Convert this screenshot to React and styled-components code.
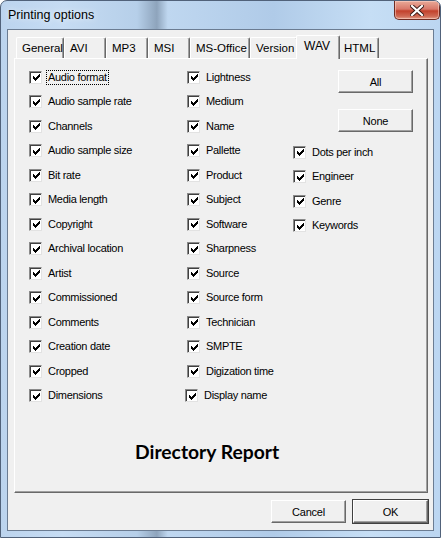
import React from "react";
import styled, { createGlobalStyle } from "styled-components";

const GlobalStyle = createGlobalStyle`
  html, body { margin: 0; padding: 0; background: #fff; }
  body { font-family: "Liberation Sans", Arial, sans-serif; }
`;

const Window = styled.div`
  width: 441px;
  height: 538px;
  box-sizing: border-box;
  border: 1px solid #51627a;
  border-radius: 7px 7px 0 0;
  background: linear-gradient(90deg, #bcd4ee 0%, #c6dcf3 14%, #b6cfe9 31%, #8ea4bc 35.5%, #bfd7f0 38%, #b0cbe8 62%, #c6def5 84%, #bcd6f1 100%);
  display: flex;
  flex-direction: column;
  overflow: hidden;
`;

const TitleBar = styled.div`
  height: 28px;
  display: flex;
  align-items: flex-start;
  padding-left: 7px;
`;

const Title = styled.div`
  font-size: 12.5px;
  color: #000;
  margin-top: 7px;
  text-shadow: 0 0 6px rgba(255, 255, 255, 0.9);
`;

const CloseButton = styled.div`
  margin-left: auto;
  width: 46px;
  height: 19px;
  box-sizing: border-box;
  border: 1px solid #6e2b22;
  border-top: none;
  border-radius: 0 0 5px 5px;
  background: linear-gradient(#e9aa98 0%, #d8786a 45%, #c2412c 55%, #cf6a55 85%, #e3a08c 100%);
  box-shadow: inset 0 0 0 1px rgba(255, 220, 210, 0.5);
  display: flex;
  align-items: center;
  justify-content: center;
`;

const Client = styled.div`
  flex: 1;
  margin: 0 6px 6px;
  border: 1px solid #6b7c92;
  background: #f0f0f0;
  display: flex;
  flex-direction: column;
  padding: 5px 5px 7px 6px;
  font-size: 11px;
  color: #000;
`;

const TabStrip = styled.div`
  display: flex;
  height: 23px;
  padding-left: 2px;
  position: relative;
  z-index: 1;
`;

const Tab = styled.div`
  box-sizing: border-box;
  width: ${(p) => p.w}px;
  height: ${(p) => (p.active ? 24 : 21)}px;
  margin-top: ${(p) => (p.active ? 0 : 2)}px;
  margin-left: ${(p) => (p.active ? -2 : 0)}px;
  margin-right: ${(p) => (p.active ? -2 : 0)}px;
  padding: ${(p) => (p.active ? "3px 0 0 7px" : "4px 0 0 5px")};
  background: #f0f0f0;
  border-top: 1px solid #fff;
  border-left: 1px solid #fff;
  border-right: 1px solid #696969;
  border-radius: 2px 2px 0 0;
  box-shadow: inset -1px 0 #a0a0a0;
  font-size: ${(p) => (p.active ? 12 : 11.5)}px;
  white-space: nowrap;
  position: relative;
  z-index: ${(p) => (p.active ? 2 : 1)};
`;

const Panel = styled.div`
  flex: 1;
  display: flex;
  flex-direction: column;
  border-top: 1px solid #fff;
  border-left: 1px solid #fff;
  border-right: 1px solid #696969;
  border-bottom: 1px solid #696969;
  box-shadow: inset -1px -1px #a0a0a0;
  padding: 6px 0 0 14px;
`;

const Columns = styled.div`
  display: flex;
`;

const Column = styled.div`
  width: ${(p) => p.w}px;
  display: flex;
  flex-direction: column;
`;

const Row = styled.div`
  height: 24.5px;
  display: flex;
  align-items: center;
  margin-left: ${(p) => p.shift || 0}px;
`;

const Box = styled.span`
  width: 13px;
  height: 13px;
  box-sizing: border-box;
  flex: none;
  background: #fff;
  border: 1px solid;
  border-color: #8a8a8a #e2e2e2 #e2e2e2 #8a8a8a;
  box-shadow: inset 1px 1px #404040;
  display: flex;
  align-items: center;
  justify-content: center;
  padding: 1px 0 0 1px;
`;

const Label = styled.span`
  margin-left: 4px;
  padding: 0 1px;
  line-height: 13px;
  border: 1px dotted ${(p) => (p.focused ? "#000" : "transparent")};
  white-space: nowrap;
  letter-spacing: -0.3px;
`;

const ButtonStack = styled.div`
  display: flex;
  flex-direction: column;
  gap: 16px;
  padding-left: 45px;
  margin-top: 5px;
  margin-bottom: 8px;
`;

const Button = styled.div`
  width: 75px;
  height: 23px;
  box-sizing: border-box;
  background: #f0f0f0;
  border: 1px solid;
  border-color: #fff #696969 #696969 #fff;
  box-shadow: inset -1px -1px #a0a0a0, ${(p) => (p.isDefault ? "0 0 0 1px #404040" : "0 0 0 0 transparent")};
  display: flex;
  align-items: center;
  justify-content: center;
  font-size: 11px;
  letter-spacing: -0.2px;
`;

const ReportArea = styled.div`
  flex: 1;
  display: flex;
  align-items: center;
  padding-left: 106px;
  padding-top: 2px;
`;

const ReportTitle = styled.div`
  font-family: Lato, "Open Sans", sans-serif;
  font-weight: 700;
  font-size: 19.3px;
  color: #000;
`;

const Footer = styled.div`
  display: flex;
  justify-content: flex-end;
  gap: 7px;
  margin-top: 7px;
`;

// classic 7x7 pixel check mark
const checkPixels = [
  [6, 0],
  [5, 1], [6, 1],
  [0, 2], [4, 2], [5, 2], [6, 2],
  [0, 3], [1, 3], [3, 3], [4, 3], [5, 3],
  [0, 4], [1, 4], [2, 4], [3, 4], [4, 4],
  [1, 5], [2, 5], [3, 5],
  [2, 6],
];

function Check() {
  return (
    <svg width="7" height="7" viewBox="0 0 7 7" shapeRendering="crispEdges">
      {checkPixels.map(([x, y]) => (
        <rect key={`${x}-${y}`} x={x} y={y} width="1" height="1" fill="#000" />
      ))}
    </svg>
  );
}

function CheckRow({ label, focused, shift }) {
  return (
    <Row shift={shift}>
      <Box>
        <Check />
      </Box>
      <Label focused={focused}>{label}</Label>
    </Row>
  );
}

const col1 = [
  "Audio format",
  "Audio sample rate",
  "Channels",
  "Audio sample size",
  "Bit rate",
  "Media length",
  "Copyright",
  "Archival location",
  "Artist",
  "Commissioned",
  "Comments",
  "Creation date",
  "Cropped",
  "Dimensions",
];

const col2 = [
  "Lightness",
  "Medium",
  "Name",
  "Pallette",
  "Product",
  "Subject",
  "Software",
  "Sharpness",
  "Source",
  "Source form",
  "Technician",
  "SMPTE",
  "Digization time",
  "Display name",
];

const col3 = ["Dots per inch", "Engineer", "Genre", "Keywords"];

const tabs = [
  { name: "General", w: 48 },
  { name: "AVI", w: 42 },
  { name: "MP3", w: 42 },
  { name: "MSI", w: 42 },
  { name: "MS-Office", w: 60 },
  { name: "Version", w: 48 },
  { name: "WAV", w: 44, active: true },
  { name: "HTML", w: 41 },
];

export default function App() {
  return (
    <>
      <GlobalStyle />
      <Window>
        <TitleBar>
          <Title>Printing options</Title>
          <CloseButton>
            <svg width="14" height="11" viewBox="0 0 14 11">
              <path d="M2 1 L12 10 M12 1 L2 10" stroke="#3a1a16" strokeWidth="4" strokeLinecap="square" />
              <path d="M2 1 L12 10 M12 1 L2 10" stroke="#fff" strokeWidth="2.2" strokeLinecap="square" />
            </svg>
          </CloseButton>
        </TitleBar>
        <Client>
          <TabStrip>
            {tabs.map((t) => (
              <Tab key={t.name} w={t.w} active={t.active}>
                {t.name}
              </Tab>
            ))}
          </TabStrip>
          <Panel>
            <Columns>
              <Column w={158}>
                {col1.map((l, i) => (
                  <CheckRow key={l} label={l} focused={i === 0} />
                ))}
              </Column>
              <Column w={106}>
                {col2.map((l, i) => (
                  <CheckRow key={l} label={l} shift={i === col2.length - 1 ? -2 : 0} />
                ))}
              </Column>
              <Column w={130}>
                <ButtonStack>
                  <Button>All</Button>
                  <Button>None</Button>
                </ButtonStack>
                {col3.map((l) => (
                  <CheckRow key={l} label={l} />
                ))}
              </Column>
            </Columns>
            <ReportArea>
              <ReportTitle>Directory Report</ReportTitle>
            </ReportArea>
          </Panel>
          <Footer>
            <Button>Cancel</Button>
            <Button isDefault>OK</Button>
          </Footer>
        </Client>
      </Window>
    </>
  );
}
